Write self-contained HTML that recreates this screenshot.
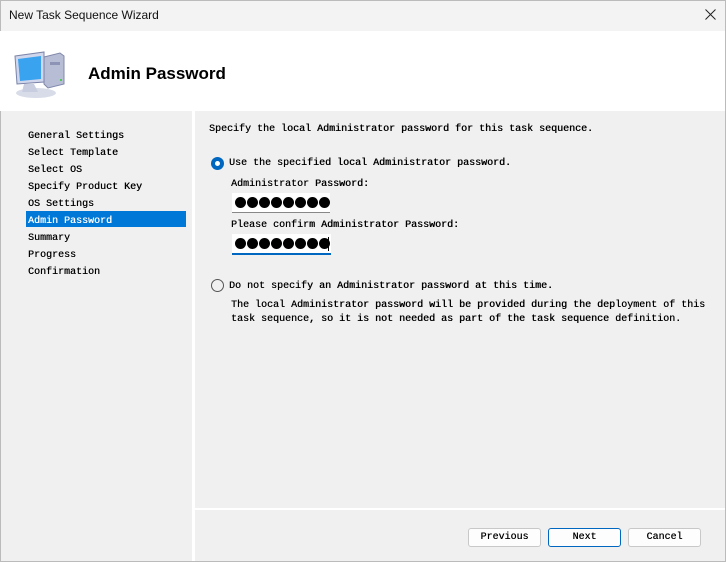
<!DOCTYPE html>
<html><head><style>
*{margin:0;padding:0;box-sizing:border-box}
body{width:726px;height:562px;position:relative;background:#f0f0f0;font-family:"Liberation Mono",monospace;font-size:10px;color:#000;overflow:hidden}
.a{position:absolute;white-space:pre}
.btn{position:absolute;top:528px;height:19px;width:73px;background:#fdfdfd;border:1px solid #c8c8c8;border-radius:3px;text-align:center;line-height:17px;font-size:10px}
.d{position:absolute;display:flex;gap:1px}
.d i{display:block;width:11px;height:11px;border-radius:50%;background:#000}
.t{text-shadow:0.3px 0 0 #000}
</style></head><body>
<div class="a" style="left:0;top:0;width:726px;height:31px;background:#f3f3f3;border:1px solid #bbb;border-bottom:none"></div>
<div class="a" style="left:9px;top:8px;font-family:'Liberation Sans',sans-serif;font-size:12px;color:#111">New Task Sequence Wizard</div>
<svg class="a" style="left:705px;top:9px" width="11" height="11" viewBox="0 0 11 11"><path d="M0.5 0.5L10.5 10.5M10.5 0.5L0.5 10.5" stroke="#222" stroke-width="1"/></svg>
<div class="a" style="left:0;top:31px;width:726px;height:80px;background:#fff"></div>
<svg class="a" style="left:12px;top:48px" width="56" height="52" viewBox="0 0 56 52">
<ellipse cx="24" cy="45" rx="20" ry="5" fill="#d8dce8"/>
<path d="M32 9 L48 5 L52 8 L52 36 L36 40 L32 36Z" fill="#b8bdd6" stroke="#8088aa"/>
<rect x="38" y="14" width="10" height="3" fill="#8c93b5"/>
<circle cx="49" cy="32" r="1" fill="#3c3"/>
<path d="M3 8 L32 4 L32 34 L5 36Z" fill="#d0d6ec" stroke="#7a84a8"/>
<path d="M6 11 L29 8 L29 31 L8 33Z" fill="#3aa3ef"/>
<path d="M12 36 L22 36 L26 44 L10 44Z" fill="#c8cde0"/>
</svg>
<div class="a" style="left:88px;top:64px;font-family:'Liberation Sans',sans-serif;font-size:17px;font-weight:bold">Admin Password</div>
<div class="a" style="left:0;top:111px;width:1px;height:451px;background:#bbb"></div>
<div class="a" style="left:725px;top:0;width:1px;height:562px;background:#bbb"></div>
<div class="a" style="left:0;top:561px;width:726px;height:1px;background:#bbb"></div>
<div class="a" style="left:192px;top:111px;width:3px;height:450px;background:#fff"></div>
<div class="a" style="left:195px;top:508px;width:530px;height:2px;background:#fff"></div>
<div class="a" style="left:26px;top:211px;width:160px;height:16px;background:#0078d7"></div>
<div class="a t" style="left:28px;top:128px;line-height:17px">General Settings
Select Template
Select OS
Specify Product Key
OS Settings
<span style="color:#fff;text-shadow:0.3px 0 0 #fff">Admin Password</span>
Summary
Progress
Confirmation</div>
<div class="a t" style="left:209px;top:124px">Specify the local Administrator password for this task sequence.</div>
<div class="a" style="left:211px;top:157px;width:13px;height:13px;border-radius:50%;background:#0067c0"></div>
<div class="a" style="left:215px;top:161px;width:5px;height:5px;border-radius:50%;background:#fff"></div>
<div class="a t" style="left:229px;top:158px">Use the specified local Administrator password.</div>
<div class="a t" style="left:231px;top:179px">Administrator Password:</div>
<div class="a" style="left:232px;top:193px;width:98px;height:20px;background:#fff;border-bottom:1px solid #888"></div>
<div class="d" style="left:235px;top:197px"><i></i><i></i><i></i><i></i><i></i><i></i><i></i><i></i></div>
<div class="a t" style="left:231px;top:220px">Please confirm Administrator Password:</div>
<div class="a" style="left:232px;top:234px;width:99px;height:21px;background:#fff;border-bottom:2px solid #0067c0"></div>
<div class="d" style="left:235px;top:238px"><i></i><i></i><i></i><i></i><i></i><i></i><i></i><i></i></div>
<div class="a" style="left:328px;top:237px;width:1px;height:14px;background:#000"></div>
<div class="a" style="left:211px;top:279px;width:13px;height:13px;border-radius:50%;border:1px solid #555;background:#f0f0f0"></div>
<div class="a t" style="left:229px;top:281px">Do not specify an Administrator password at this time.</div>
<div class="a t" style="left:231px;top:299px;line-height:14px">The local Administrator password will be provided during the deployment of this
task sequence, so it is not needed as part of the task sequence definition.</div>
<div class="btn t" style="left:468px">Previous</div>
<div class="btn t" style="left:548px;border-color:#0067c0">Next</div>
<div class="btn t" style="left:628px">Cancel</div>
</body></html>
